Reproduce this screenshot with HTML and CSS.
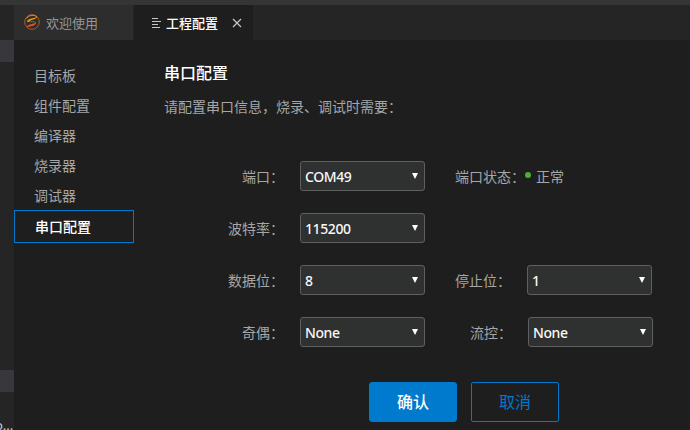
FILE: index.html
```html
<!DOCTYPE html>
<html lang="zh-CN">
<head>
<meta charset="utf-8">
<title>工程配置</title>
<link rel="stylesheet" href="styles.css">
</head>
<body>
<div class="titlebar"></div>
<div class="workbench">
  <aside class="explorer">
    <div class="row-mark"></div>
    <div class="row-mark row-mark-low"></div>
    <div class="file-name">o...</div>
  </aside>
  <section class="editor">
    <header class="tabs">
      <div class="tab">
        <svg class="logo" viewBox="0 0 16 16" fill="none">
          <circle cx="8" cy="8" r="7.3" stroke="#b85a20" stroke-width="1"/>
          <path d="M2.500 4.500A7.300 7.300 0 0 1 13 2.700" stroke="#dc9220"/>
          <path d="M3 8C4 3.500 8 5.500 13.500 2.500C12 6 7.500 5 5 8Z" fill="#e5941a"/>
          <path d="M5 7.500C6.500 8.500 10 6.500 11.500 8.500" stroke="#9d5a20"/>
          <path d="M2.500 13C5 9 9 11 12 8C12.500 11.500 8 12.500 2.500 13Z" fill="#d8542a"/>
        </svg>
        <span>欢迎使用</span>
      </div>
      <div class="tab tab-active">
        <svg class="lines" viewBox="0 0 10 10" stroke="#c5c5c5"><path d="M1 .5H7M1 3.500H10M1 6.500H7M1 9.500H9"/></svg>
        <span>工程配置</span>
        <svg class="close" viewBox="0 0 10 10" stroke="#c8c8c8" stroke-width="1.200"><path d="M1 1L9 9M9 1L1 9"/></svg>
      </div>
    </header>
    <div class="content">
      <nav class="menu">
        <div class="item">目标板</div>
        <div class="item">组件配置</div>
        <div class="item">编译器</div>
        <div class="item">烧录器</div>
        <div class="item">调试器</div>
        <div class="item item-active">串口配置</div>
      </nav>
      <main class="panel">
        <h1>串口配置</h1>
        <p class="hint">请配置串口信息，烧录、调试时需要：</p>
        <div class="form">
          <div class="row">
            <span class="label">端口：</span><div class="select">COM49<i class="arrow"></i></div>
            <span class="label label-right">端口状态：</span><span class="dot"></span><span class="state">正常</span>
          </div>
          <div class="row">
            <span class="label">波特率：</span><div class="select">115200<i class="arrow"></i></div>
          </div>
          <div class="row">
            <span class="label">数据位：</span><div class="select">8<i class="arrow"></i></div>
            <span class="label label-second">停止位：</span><div class="select">1<i class="arrow"></i></div>
          </div>
          <div class="row">
            <span class="label">奇偶：</span><div class="select">None<i class="arrow"></i></div>
            <span class="label label-second label-flow">流控：</span><div class="select">None<i class="arrow"></i></div>
          </div>
        </div>
        <div class="actions">
          <button class="button primary">确认</button>
          <button class="button">取消</button>
        </div>
      </main>
    </div>
  </section>
</div>
</body>
</html>
```
FILE: styles.css
```css
* { box-sizing: border-box; }
body {
  margin: 0;
  height: 430px;
  overflow: hidden;
  background: #1e1e1e;
  color: #a6a6a6;
  font: 14px/20px "Noto Sans", "Noto Sans CJK SC", sans-serif;
}
.titlebar { height: 5px; background: #353535; }
.workbench { display: flex; height: 425px; }
.explorer {
  width: 14px;
  flex: none;
  padding-top: 35px;
  background: #252526;
  overflow: hidden;
}
.row-mark { height: 22px; background: #37373d; }
.row-mark-low { margin-top: 308px; }
.file-name {
  margin: 22px 0 0 -5px;
  color: #cccccc;
  font-size: 13px;
  line-height: 22px;
  white-space: nowrap;
}
.editor { flex: 1; min-width: 0; }
.tabs { display: flex; height: 35px; background: #252526; }
.tab {
  display: flex;
  align-items: center;
  width: 119px;
  margin-right: 1px;
  padding-left: 10px;
  background: #2d2d2d;
  color: #969696;
  font-size: 13px;
}
.tab-active { background: #1e1e1e; color: #fff; padding-left: 17px; }
.tab span { white-space: nowrap; }
.tab-active span { font-weight: 500; }
.logo { width: 16px; height: 16px; margin-right: 6px; margin-top: -1px; flex: none; }
.lines { width: 10px; height: 10px; margin-right: 5px; flex: none; }
.close { width: 10px; height: 10px; margin-left: 14px; flex: none; }
.content { display: flex; }
.menu { width: 120px; padding-top: 20px; flex: none; }
.item { height: 30px; padding-left: 20px; line-height: 31px; }
.item-active {
  height: 33px;
  border: 1px solid #007acc;
  color: #fff;
  font-weight: 500;
}
.panel { padding: 21px 0 0 30px; flex: 1; }
h1 {
  margin: 0;
  color: #fff;
  font-size: 16px;
  font-weight: 500;
  line-height: 24px;
}
.hint { margin: 12px 0 44px; line-height: 20px; }
.form { display: grid; gap: 22px; }
.row { display: flex; align-items: center; height: 30px; white-space: nowrap; }
.label { width: 120px; margin-right: 16px; padding-top: 2px; text-align: right; }
.label-right { width: 70px; margin: 0 0 0 30px; }
.label-second { width: 56px; margin-left: 30px; }
.label-flow { width: 57px; }
.select {
  display: flex;
  align-items: center;
  justify-content: space-between;
  width: 125px;
  height: 30px;
  padding: 2px 6px 0 4px;
  border: 1px solid #5f5f5f;
  border-radius: 3px;
  background: #2f3130;
  color: #f8f8f8;
  font-weight: 500;
  letter-spacing: -0.4px;
}
.arrow {
  margin-top: -3px;
  border: 3px solid transparent;
  border-top: 6px solid #fff;
  border-bottom: 0;
}
.dot { width: 6px; height: 6px; margin: -3px 5px 0 0; border-radius: 50%; background: #4caf37; }
.state { padding-top: 2px; }
.actions { display: flex; gap: 14px; margin: 35px 0 0 205px; }
.button {
  width: 88px;
  height: 40px;
  padding: 0;
  border: 1px solid #007acc;
  border-radius: 2px;
  background: transparent;
  color: #007acc;
  font: inherit;
  font-size: 16px;
}
.primary { background: #007acc; color: #fff; border-radius: 3px; font-weight: 500; }
```
